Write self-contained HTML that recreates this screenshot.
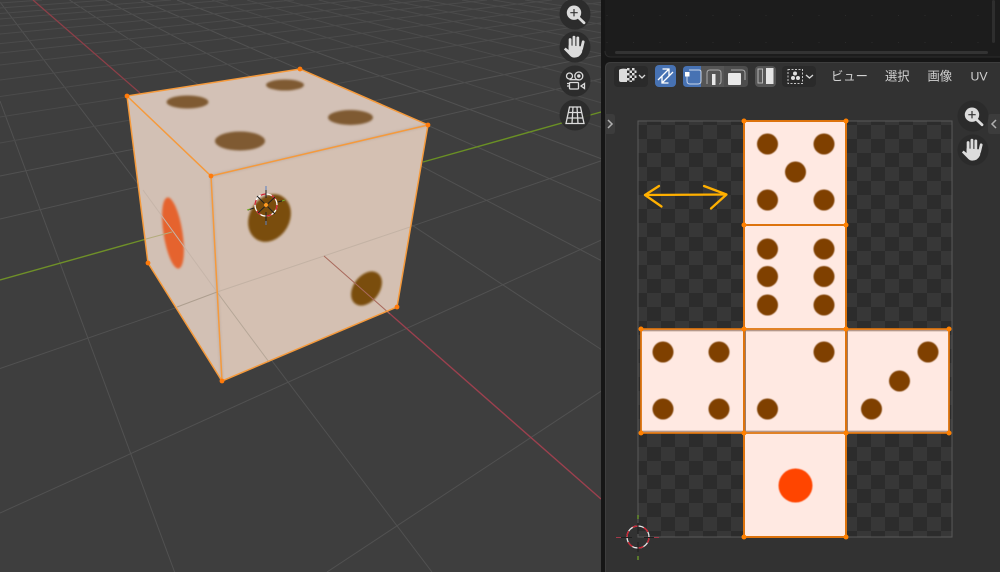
<!DOCTYPE html>
<html>
<head>
<meta charset="utf-8">
<style>
html,body{margin:0;padding:0;background:#3f3f3f;width:1000px;height:572px;overflow:hidden;}
svg{display:block;overflow:hidden;}
text{font-family:"Liberation Sans","Noto Sans CJK JP",sans-serif;font-size:12.3px;fill:#d2d2d2;}
</style>
</head>
<body>
<svg xmlns="http://www.w3.org/2000/svg" width="1000" height="572" viewBox="0 0 1000 572">
<defs>
<filter id="b1" x="-20%" y="-20%" width="140%" height="140%"><feGaussianBlur stdDeviation="1"/></filter>
<filter id="b2" x="-20%" y="-20%" width="140%" height="140%"><feGaussianBlur stdDeviation="0.5"/></filter>
<pattern id="chk" x="647" y="125" width="28" height="28" patternUnits="userSpaceOnUse">
<rect width="28" height="28" fill="#2c2c2c"/><rect width="14" height="14" fill="#373737"/><rect x="14" y="14" width="14" height="14" fill="#373737"/>
</pattern>
<pattern id="dots" x="622" y="15" width="26.5" height="27" patternUnits="userSpaceOnUse"><rect x="11" width="1" height="1" fill="#2b2b2b"/></pattern>
<g id="zoomi">
<circle r="15.5" fill="#2a2a2a" opacity=".92"/>
<circle cx="-1" cy="-1.3" r="7.2" fill="#dcdcdc"/>
<path d="M3.5 3.5L9 8.8" stroke="#dcdcdc" stroke-width="2.8" stroke-linecap="round"/>
<path d="M-1 -5V2.4M-4.7 -1.3H2.7" stroke="#333" stroke-width="1.2"/>
</g>
<g id="handi">
<circle r="15.5" fill="#2a2a2a" opacity=".92"/>
<g transform="translate(0 -.5) scale(1.17)">
<path d="M-4.2 1V-6M-.9 0V-8M2.4 0V-7.4M5.6 2L7 -4" stroke="#dcdcdc" stroke-width="2.4" stroke-linecap="round" fill="none"/>
<path d="M-5.5 -1L6.8 0L6 5Q4 9.5 -.5 9.5Q-3 9.5 -5 7L-9.5 2.5L-8 1L-5.5 3Z" fill="#dcdcdc"/>
</g>
</g>
</defs>

<!-- 3D viewport -->
<rect width="602" height="572" fill="#3e3e3e"/>
<g stroke="#515151" stroke-width="1" fill="none">
<path d="M327 572L602 390.600M0 513L602 239.700M0 368.500L602 160.500M0 219L602 78.600M0 176L602 55"/>
<path d="M0 101L174.600 572M0 2L432 572M69.500 0L602 350M105 0L602 261M141 0L602 201.600M177 0L602 159"/>
</g>
<g stroke="#4b4b4b" stroke-width="1" fill="none">
<path d="M0 143L602 36.900M0 117L602 22.600M0 96.500L602 11.400M0 80L602 2.300M0 65L552 0M0 53L487 0M0 43.600L429 0M0 34L360 0M0 26L294 0M0 19L228 0M0 13.500L171 0M0 8L107 0M0 3L42 0"/>
<path d="M212 0L602 127.500M247 0L602 103M284 0L602 83M318.600 0L602 67.500M355 0L602 54M389 0L602 43M424 0L602 33M462 0L602 24.500M493 0L602 18M525 0L602 12M566 0L602 5.300"/>
</g>
<path d="M33 0L140 93" stroke="#8e3f48" stroke-width="1.300"/>
<path d="M324 256L601 499" stroke="#9c404e" stroke-width="1.400"/>
<path d="M0 280L150 238" stroke="#6f9028" stroke-width="1.400"/>
<path d="M423 162L601 112" stroke="#6a9024" stroke-width="1.400"/>

<!-- cube -->
<path d="M127 96L300 69L428 125L211 176Z" fill="#d3c1b6"/>
<path d="M127 96L211 176L222 381L148 263Z" fill="#d2c0b4"/>
<path d="M211 176L428 125L397 307L222 381Z" fill="#d4c0b2"/>
<path d="M211 176L428 125" stroke="#b9a79c" stroke-width="3" filter="url(#b1)" fill="none" opacity=".6"/>
<path d="M211 176L222 381" stroke="#b9a79c" stroke-width="3" filter="url(#b1)" fill="none" opacity=".6"/>
<g filter="url(#b1)">
<ellipse cx="187.500" cy="102" rx="21" ry="6.500" fill="#7f5a32"/>
<ellipse cx="285" cy="85" rx="19" ry="5.500" fill="#7f5a32"/>
<ellipse cx="350.500" cy="117.500" rx="22.500" ry="7.500" fill="#7f5a32"/>
<ellipse cx="240" cy="141" rx="25" ry="9.500" fill="#7f5a32"/>
<ellipse cx="173" cy="233" rx="9.500" ry="36" transform="rotate(-9 173 233)" fill="#e5642d"/>
<ellipse cx="269.500" cy="218" rx="20" ry="25" transform="rotate(30 269.500 218)" fill="#7a4d0c"/>
<ellipse cx="366.500" cy="288.500" rx="13" ry="19" transform="rotate(37 366.500 288.500)" fill="#7a4d0c"/>
</g>
<g fill="none" stroke-width="1">
<path d="M177 307L217 292" stroke="#ad9e8f"/>
<path d="M217 292L410 227" stroke="#c3b2a4"/>
<path d="M143 190L217 292" stroke="#c6b5a9"/>
<path d="M217 292L269 362" stroke="#b5a697"/>
<path d="M146 239L172 232" stroke="#b3ab7c"/>
<path d="M324 256L390 314" stroke="#a8695c"/>
</g>
<g fill="none" stroke="#f59a3c" stroke-width="1.500">
<path d="M127 96L300 69L428 125L397 307L222 381L148 263Z"/>
<path d="M127 96L211 176L428 125"/>
<path d="M211 176L222 381"/>
</g>
<g fill="#ff7a0a">
<circle cx="127" cy="96" r="2.400"/><circle cx="300" cy="69" r="2.400"/><circle cx="428" cy="125" r="2.400"/><circle cx="211" cy="176" r="2.400"/><circle cx="222" cy="381" r="2.400"/><circle cx="397" cy="307" r="2.400"/><circle cx="148" cy="263" r="2.400"/>
</g>
<!-- 3D cursor -->
<g fill="none">
<circle cx="266" cy="205" r="11" stroke="#fff" stroke-width="1.300"/>
<circle cx="266" cy="205" r="11" stroke="#d02030" stroke-width="1.300" stroke-dasharray="5 6.500"/>
<path d="M257 196L275 214M258 213L275 197M266 198V188M266 212V224M254 208L248 210M278 202L285 200" stroke="#222" stroke-width="1"/>
<path d="M266 186V190M266 221V225" stroke="#5a80c0" stroke-width="1"/>
<path d="M247 210L250 209M282 201L285 200" stroke="#7ab02a" stroke-width="1"/>
</g>
<circle cx="266" cy="205" r="2" fill="#ff9a20"/>

<!-- viewport gizmo buttons -->
<use href="#zoomi" x="575" y="14"/>
<use href="#handi" x="575" y="47"/>
<g transform="translate(575 81)">
<circle r="15.500" fill="#2a2a2a" opacity=".92"/>
<g fill="none" stroke="#dcdcdc" stroke-width="1.300">
<circle cx="-5.500" cy="-5" r="3"/>
<circle cx="3.800" cy="-5" r="4"/>
<path d="M-5.500 -1.300H3.800"/>
<rect x="-5.500" y="1.500" width="9" height="6.500" rx="1"/>
<path d="M9.500 2.500L6 5L9.500 7.500Z"/>
</g>
<circle cx="3.800" cy="-5" r="1.700" fill="#dcdcdc"/>
<path d="M-8 2.500H-5.500M-8 5H-5.500" stroke="#dcdcdc" stroke-width="1.200"/>
</g>
<g transform="translate(575 115)">
<circle r="15.500" fill="#2a2a2a" opacity=".92"/>
<path d="M-5.500 -8H5.500L9 8.500H-9Z" fill="none" stroke="#dcdcdc" stroke-width="1.300"/>
<path d="M-7 -2.500H7M-8 3H8M-2 -8L-3 8.500M2 -8L3 8.500" fill="none" stroke="#dcdcdc" stroke-width="1.300"/>
</g>

<!-- area separators and panels -->
<rect x="601" y="0" width="399" height="572" fill="#161616"/>
<path d="M605 0H1000V57H611Q605 57 605 51Z" fill="#1c1c1c"/>
<rect x="605" y="0" width="395" height="57" fill="url(#dots)"/>
<rect x="615" y="51" width="373" height="3" rx="1.500" fill="#333"/>
<rect x="992" y="0" width="3" height="43" rx="1.500" fill="#2e2e2e"/>
<path d="M1000 57H611Q605 57 605 51" fill="none" stroke="#2c2c2c"/>
<path d="M611 62H1000V572H605V68Q605 62 611 62Z" fill="#323232"/>
<path d="M1000 62.500H611Q605.500 62.500 605.500 68V572" fill="none" stroke="#3e3e3e"/>

<!-- header -->
<rect x="614" y="66" width="34" height="21" rx="4" fill="#2a2a2a"/>
<path d="M619 70Q621 68 627 69V82H621Q619 82 619 80Z" fill="#dcdcdc"/>
<g fill="#dcdcdc">
<rect x="627" y="68" width="2.500" height="2.500"/><rect x="632" y="68" width="2.500" height="2.500"/>
<rect x="629.500" y="70.500" width="2.500" height="2.500"/><rect x="634.500" y="70.500" width="2" height="2.500"/>
<rect x="627" y="73" width="2.500" height="2.500"/><rect x="632" y="73" width="2.500" height="2.500"/>
<rect x="629.500" y="75.500" width="2.500" height="2.500"/><rect x="634.500" y="75.500" width="2" height="2.500"/>
<rect x="627" y="78" width="2.500" height="2.500"/><rect x="632" y="78" width="2.500" height="2.500"/>
<rect x="629.500" y="80.500" width="2.500" height="1.500"/>
</g>
<path d="M639 75L642 78L645 75" fill="none" stroke="#d8d8d8" stroke-width="1.300"/>
<rect x="655" y="65" width="21" height="22" rx="4" fill="#4772b3"/>
<g fill="none" stroke="#fff" stroke-width="1.300">
<path d="M658 80L669 69M662.500 69H669V75.500"/>
<path d="M673 72L662 83M668.500 83H662V76.500"/>
</g>
<path d="M687 66H701V87H687Q683 87 683 83V70Q683 66 687 66Z" fill="#4772b3"/>
<rect x="701" y="66" width="23" height="21" fill="#555"/>
<path d="M724 66H744Q748 66 748 70V83Q748 87 744 87H724Z" fill="#4d4d4d"/>
<path d="M689 70H699Q701 70 701 72V81Q701 84 698 84H690Q687 84 687 81V72" fill="none" stroke="#c9d5e8" stroke-width="1"/>
<rect x="685" y="72" width="4.500" height="4.500" fill="#fff"/>
<path d="M707 84V73Q707 70 710 70H718Q721 70 721 73V81Q721 84 719 84" fill="none" stroke="#aaa" stroke-width="1"/>
<rect x="712" y="74" width="3.500" height="11" fill="#e8e8e8"/>
<path d="M731 70H742Q745 70 745 73V80" fill="none" stroke="#aaa" stroke-width="1"/>
<rect x="728" y="73" width="13" height="12" rx="1" fill="#e8e8e8"/>
<rect x="755" y="66" width="21" height="21" rx="4" fill="#555"/>
<rect x="758" y="69" width="4.500" height="14" fill="none" stroke="#b4b4b4" stroke-width="1"/>
<rect x="766" y="68" width="7.500" height="16" fill="#e4e4e4"/>
<rect x="782" y="66" width="34" height="21" rx="4" fill="#2a2a2a"/>
<rect x="788" y="69.500" width="14.500" height="14" fill="none" stroke="#c8c8c8" stroke-width="1" stroke-dasharray="2 1.500"/>
<g fill="#e0e0e0">
<circle cx="795" cy="73.500" r="2"/><circle cx="793" cy="78" r="2"/><circle cx="798" cy="78" r="2"/>
</g>
<path d="M806 75L809.500 78L813 75" fill="none" stroke="#d8d8d8" stroke-width="1.300"/>
<text x="831" y="80.500">ビュー</text>
<text x="885" y="80.500">選択</text>
<text x="927.500" y="80.500">画像</text>
<text x="970.500" y="80.500">UV</text>

<!-- sidebar toggles -->
<path d="M605 114H612Q615 114 615 117V131Q615 134 612 134H605Z" fill="#3c3c3c"/>
<path d="M608 120L612 124L608 128" fill="none" stroke="#b0b0b0" stroke-width="1.500"/>
<path d="M1000 114H991Q988 114 988 117V131Q988 134 991 134H1000Z" fill="#3c3c3c"/>
<path d="M996 120L992 124L996 128" fill="none" stroke="#b0b0b0" stroke-width="1.500"/>

<!-- UV image background -->
<rect x="638" y="121" width="314" height="416" fill="url(#chk)"/>
<rect x="638" y="121" width="314" height="416" fill="none" stroke="#595959" stroke-width="1"/>

<!-- UV faces -->
<g fill="#ffe9e2">
<rect x="744" y="121" width="102" height="416"/>
<rect x="641" y="329" width="308" height="104"/>
</g>
<g fill="#7f3f00" filter="url(#b2)">
<circle cx="767.500" cy="144" r="10.500"/><circle cx="824" cy="144" r="10.500"/><circle cx="795.500" cy="172" r="10.500"/><circle cx="767.500" cy="200" r="10.500"/><circle cx="824" cy="200" r="10.500"/>
<circle cx="767.500" cy="249" r="10.500"/><circle cx="824" cy="249" r="10.500"/><circle cx="767.500" cy="276.500" r="10.500"/><circle cx="824" cy="276.500" r="10.500"/><circle cx="767.500" cy="305" r="10.500"/><circle cx="824" cy="305" r="10.500"/>
<circle cx="663" cy="352" r="10.500"/><circle cx="719" cy="352" r="10.500"/><circle cx="663" cy="409" r="10.500"/><circle cx="719" cy="409" r="10.500"/>
<circle cx="824" cy="352" r="10.500"/><circle cx="767.500" cy="409" r="10.500"/>
<circle cx="928" cy="352" r="10.500"/><circle cx="899.500" cy="381" r="10.500"/><circle cx="871.500" cy="409" r="10.500"/>
<circle cx="795.500" cy="485.500" r="17" fill="#ff4500"/>
</g>
<g fill="none" stroke="#9c7c6c" stroke-width="1">
<path d="M641 330.800H949M641 431.200H949M745.500 329V433M847.500 329V433"/>
</g>
<g fill="none" stroke="#dd730d" stroke-width="2">
<path d="M744 121H846V537H744ZM744 225H846M744 329V433M846 329V433"/>
<path d="M641 329H949V433H641Z" stroke-width="1.800"/>
</g>
<g fill="#ff8000">
<circle cx="744" cy="121" r="2.500"/><circle cx="846" cy="121" r="2.500"/><circle cx="744" cy="225" r="2.500"/><circle cx="846" cy="225" r="2.500"/>
<circle cx="641" cy="329" r="2.500"/><circle cx="744" cy="329" r="2.500"/><circle cx="846" cy="329" r="2.500"/><circle cx="949" cy="329" r="2.500"/>
<circle cx="641" cy="433" r="2.500"/><circle cx="744" cy="433" r="2.500"/><circle cx="846" cy="433" r="2.500"/><circle cx="949" cy="433" r="2.500"/>
<circle cx="744" cy="537" r="2.500"/><circle cx="846" cy="537" r="2.500"/>
</g>

<!-- arrow -->
<g fill="none" stroke="#ffb000" stroke-width="2.300" stroke-linecap="round" stroke-linejoin="round">
<path d="M645 195L726 194.500"/>
<path d="M659 186L645 195L661.500 206.500"/>
<path d="M704 186L726.500 194.500L711 208.500"/>
</g>

<!-- UV buttons -->
<use href="#zoomi" x="973" y="116"/>
<use href="#handi" x="973" y="150"/>

<!-- UV 2D cursor -->
<g fill="none">
<circle cx="638" cy="537" r="11" stroke="#e8e8e8" stroke-width="1.300"/>
<circle cx="638" cy="537" r="11" stroke="#d02030" stroke-width="1.300" stroke-dasharray="6 5.500"/>
<path d="M616 537.500H621M654 537.500H659" stroke="#a33a4a" stroke-width="1"/>
<path d="M621 537.500H632M644 537.500H654M638 523V534M638 542V552" stroke="#1f1f1f" stroke-width="1"/>
<path d="M638 515V519M638 556V560" stroke="#6f9f2a" stroke-width="1.300"/>
</g>
</svg>
</body>
</html>
